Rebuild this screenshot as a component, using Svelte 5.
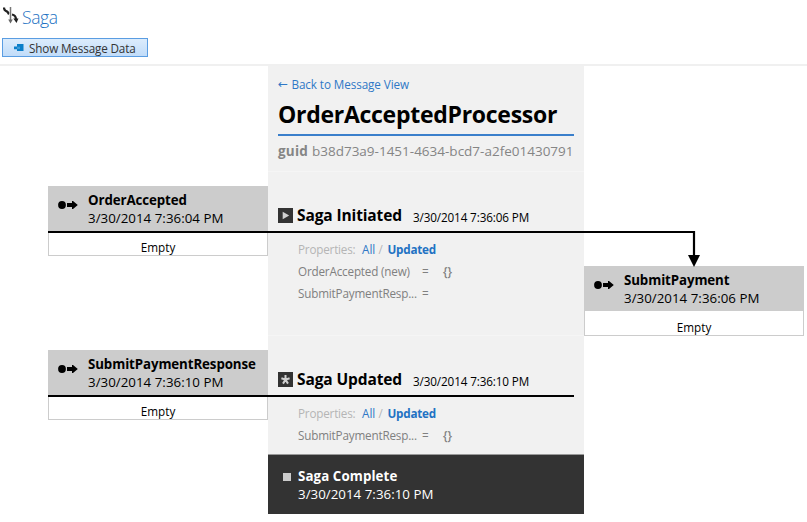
<script>
  const stamp = '3/30/2014 7:36:';
</script>

{#snippet message(name, sec)}
  <article class="message">
    <div class="head">
      <svg width="20" height="8" viewBox="0 0 20 8"><circle cx="4" cy="4" r="3.9" /><path d="M9 2h5V0h1L19.800 4 15 8h-1V6H9z" /></svg>
      <div class="lines"><b>{name}</b><span class="date">{stamp}{sec} PM</span></div>
    </div>
    <div class="body">Empty</div>
  </article>
{/snippet}

{#snippet step(kind, title, sec, rows)}
  <section class="step">
    <div class="step-title">
      <svg width="15" height="15" viewBox="0 0 15 15">
        <rect width="15" height="15" fill="#333" />
        {#if kind === 'start'}
          <path d="M4.700 3.800l6.500 3.700-6.500 3.700z" fill="#d0d0d0" />
        {:else}
          <path d="M7.500 3v4.700M3.400 6.300l4.100 1.400 4.100-1.400M5 11.600l2.500-3.900 2.500 3.900" stroke="#d0d0d0" stroke-width="2" fill="none" />
        {/if}
      </svg>
      <b>{title}</b><span class="step-date">{stamp}{sec} PM</span>
    </div>
    <div class="filter"><span class="props">Properties:</span><span class="all">All</span><span class="slash">/</span><b>Updated</b></div>
    {#each rows as [key, value]}
      <div class="row"><span class="key">{key}</span><span class="eq">=</span><span class="value">{value}</span></div>
    {/each}
  </section>
{/snippet}

<main>
  <header>
    <svg width="17" height="18" viewBox="0 0 17 18" fill="none">
      <path d="M7.500 0v14" stroke="#777" stroke-width="1.500" />
      <path d="M5.200 12.500h4.600L7.500 16.500z" fill="#666" />
      <path d="M1 .5c0 3.500 1.500 3 3 4S5 6.500 6 7" stroke="#222" stroke-width="2.200" />
      <path d="M9 7.500c2.500.5 4 2 4 5" stroke="#222" stroke-width="2.200" />
      <path d="M10.300 11.500h5.200L13.500 16z" fill="#222" />
    </svg>
    <span>Saga</span>
  </header>
  <button>
    <svg width="10" height="8" viewBox="0 0 10 8"><path d="M3 0h6.500v7H3V5.300H0V2.500h3z" fill="#0b7fc9" /><path d="M3 2.700h3v2.400H3z" fill="#3d9bd6" /></svg>
    <span>Show Message Data</span>
  </button>
  <div class="canvas">
    <div class="col left">{@render message('OrderAccepted', '04')}{@render message('SubmitPaymentResponse', '10')}</div>
    <div class="center">
      <div class="intro">
        <div class="back"><span>←</span>Back to Message View</div>
        <h1>OrderAcceptedProcessor</h1>
        <p><b>guid</b><span>b38d73a9-1451-4634-bcd7-a2fe01430791</span></p>
      </div>
      {@render step('start', 'Saga Initiated', '06', [['OrderAccepted (new)', '{}'], ['SubmitPaymentResp...', '']])}
      {@render step('update', 'Saga Updated', '10', [['SubmitPaymentResp...', '{}']])}
      <footer><i></i><div class="lines"><b>Saga Complete</b><span class="date">{stamp}10 PM</span></div></footer>
    </div>
    <div class="col right">{@render message('SubmitPayment', '06')}</div>
    <svg class="wires" width="807" height="456" viewBox="0 66 807 456" fill="none">
      <path d="M48 232H694V256" stroke="#000" stroke-width="2.200" />
      <path d="M688 255h12l-6 12z" fill="#000" />
      <path d="M48 396H574" stroke="#000" stroke-width="2.200" />
    </svg>
  </div>
</main>

<style>
  :global(body) { background: #fff; }
  main { width: 807px; height: 522px; overflow: hidden; font-family: 'Open Sans', 'Noto Sans', sans-serif; white-space: nowrap; color: #000; }
  svg { display: block; flex: none; }
  header { height: 38px; display: flex; gap: 2px; padding: 7px 0 0 3px; box-sizing: border-box; }
  header span { font-size: 17.5px; font-weight: 300; line-height: 20px; letter-spacing: -0.4px; color: #2272c3; }
  button { display: flex; align-items: center; gap: 5px; box-sizing: border-box; width: 146px; height: 19px; margin: 0 0 0 2px; padding: 0 0 0 11px; border: 1px solid #5a9de2; background: linear-gradient(#dcecfc, #c1dcf9); font: 11.7px 'Open Sans', sans-serif; letter-spacing: -0.14px; color: #333; }
  button span { line-height: 17px; padding-top: 2px; }
  .canvas { position: relative; display: flex; height: 456px; padding-left: 48px; margin-top: 7px; border-top: 2px solid #f0f0f0; }
  .wires { position: absolute; left: 0; top: 0; }
  .col { width: 220px; display: flex; flex-direction: column; gap: 94px; }
  .left { padding-top: 120px; }
  .right { padding-top: 200px; }
  .message { height: 70px; }
  .head { display: flex; gap: 10px; box-sizing: border-box; height: 45px; padding: 5px 0 0 10px; background: #ccc; }
  .head svg { margin-top: 9.500px; }
  .lines { display: flex; flex-direction: column; font-size: 13.3px; line-height: 18px; letter-spacing: -0.1px; }
  .date { letter-spacing: 0.03px; }
  .body { box-sizing: border-box; height: 25px; padding-top: 9px; border: solid #ccc; border-width: 0 1px 1px; background: #fff; font-size: 11.7px; line-height: 15px; text-align: center; }
  .center { width: 316px; height: 448px; background: #f1f1f1; }
  .intro { box-sizing: border-box; height: 105px; padding: 10px 10px 0; }
  .back { display: flex; font-size: 11.7px; line-height: 16px; letter-spacing: -0.09px; color: #2f78c6; }
  .back span { width: 13.5px; font-family: 'DejaVu Sans', sans-serif; font-size: 12px; }
  h1 { margin: 0; padding-top: 2px; font-size: 23px; line-height: 40px; font-weight: 700; letter-spacing: -0.28px; border-bottom: 2px solid #3a7fcb; }
  p { display: flex; gap: 4px; margin: 0; font-size: 13.5px; line-height: 30px; color: #858585; }
  p b { letter-spacing: 0.2px; }
  .step { box-sizing: border-box; height: 164px; padding: 36px 0 0 10px; border-top: 1px solid #f5f5f5; }
  .step + .step { height: 119px; }
  .step-title { display: flex; height: 15px; line-height: 15px; margin-bottom: 15px; }
  .step-title b { margin-left: 4px; font-size: 15.5px; letter-spacing: -0.12px; }
  .step-date { margin: 2px 0 0 11px; font-size: 11.7px; letter-spacing: -0.12px; }
  .filter { display: flex; height: 22px; padding-left: 20px; font-size: 11.7px; line-height: 23px; color: #b5b5b5; }
  .props { width: 64px; letter-spacing: -0.2px; }
  .all { width: 16.5px; color: #2f78c6; }
  .slash { width: 9px; }
  .filter b { letter-spacing: -0.25px; color: #2272c3; }
  .row { display: flex; padding-left: 20px; font-size: 11.7px; line-height: 22px; color: #808080; }
  .key { width: 124px; letter-spacing: -0.18px; }
  .eq { width: 21px; }
  .value { font-weight: 600; }
  footer { display: flex; gap: 7px; box-sizing: border-box; height: 60px; padding: 12px 0 0 15px; border-top: 1px solid #999; background: #333; color: #fff; }
  footer i { width: 8px; height: 8px; margin-top: 6px; background: #ccc; }
  footer b { letter-spacing: 0.1px; }
</style>
